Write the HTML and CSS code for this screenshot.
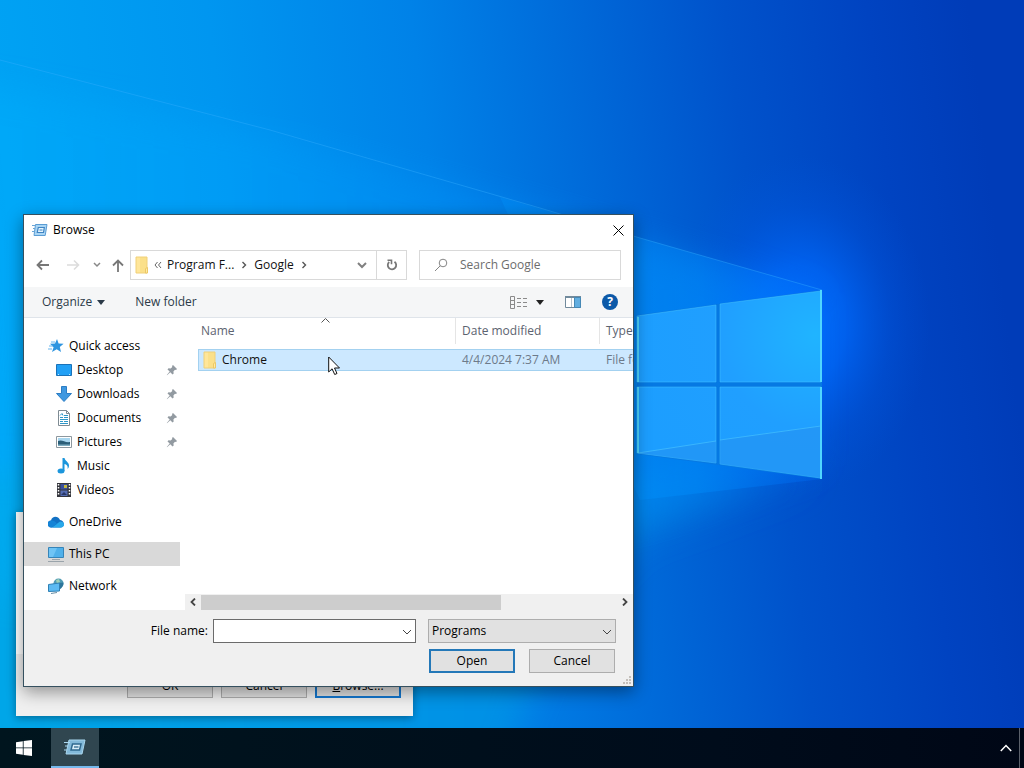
FILE: index.html
```html
<!DOCTYPE html>
<html lang="en">
<head>
  <meta charset="UTF-8">
  <meta name="viewport" content="width=device-width, initial-scale=1.0">
  <title>Browse</title>
  <link rel="stylesheet" href="styles.css">
</head>
<body>
  <!-- shared icons -->
  <svg class="defs" width="0" height="0" aria-hidden="true">
    <symbol id="pin" viewBox="0 0 12 12"><path d="M7 1l4 4-1 1-1-.3L7.400 7.500 7.700 9.500 6.500 10.500 4.300 8.200 1 11.200.8 11 3.700 7.600 1.500 5.400 2.500 4.200 4.600 4.500 6.300 2.900 6 2z" fill="#929aa1"/></symbol>
    <symbol id="folder" viewBox="0 0 14 18"><path d="M1 1h11v16H1z" fill="#fbe08a"/><path d="M1 1h4v16H1z" fill="#ffe69a"/><path d="M1 1h11v16H1z" fill="none" stroke="#f0d078"/><path d="M10.500 12.500l2-1V17h-2z" fill="#ffeaa5" stroke="#ecc866"/></symbol>
    <symbol id="down" viewBox="0 0 10 6"><path d="M1 1l4 4 4-4" fill="none" stroke="currentColor"/></symbol>
    <symbol id="right" viewBox="0 0 6 8"><path d="M1.500 1l3 3-3 3" fill="none" stroke="currentColor" stroke-width="1.400"/></symbol>
    <symbol id="run" viewBox="0 0 16 14"><path d="M3.500 1.500h11.500l-1.800 11H2z" fill="#a9d5f4" stroke="#5a9cd4"/><path d="M6.300 4.500h6l-.8 5H5.300z" fill="#e6f5fd" stroke="#3f84c4" stroke-width="1.200"/><path d="M7.500 7h3" stroke="#3f84c4"/><path d="M0 2.500h4M1 5.500h2M0 8.500h3" stroke="#6aa5d6"/></symbol>
    <symbol id="run-task" viewBox="0 0 22 18"><path d="M5 2h16l-3 14H2z" fill="#83b9d9" stroke="#a9d6ee"/><path d="M8.500 6h8.500l-1.500 6H7z" fill="#d9eef8" stroke="#31698e" stroke-width="1.500"/><path d="M10 9h4.500" stroke="#31698e" stroke-width="1.300"/><path d="M0 4.500h6M1 8h3M0 12h3" stroke="#a9d6ee"/></symbol>
  </svg>

  <div class="desktop">
    <svg class="wallpaper" viewBox="0 0 1024 768" preserveAspectRatio="xMidYMid slice" aria-hidden="true">
      <defs>
        <linearGradient id="sky" gradientUnits="userSpaceOnUse" x1="0" y1="384" x2="1000" y2="260">
          <stop offset="0" stop-color="#00a4f4"/>
          <stop offset=".25" stop-color="#0096f0"/>
          <stop offset=".45" stop-color="#0082e8"/>
          <stop offset=".62" stop-color="#0068d8"/>
          <stop offset=".76" stop-color="#0052cb"/>
          <stop offset=".9" stop-color="#0043c1"/>
          <stop offset="1" stop-color="#003cb8"/>
        </linearGradient>
        <linearGradient id="beam" gradientUnits="userSpaceOnUse" x1="0" y1="0" x2="822" y2="0">
          <stop offset="0" stop-color="#00b2ff" stop-opacity=".6"/>
          <stop offset=".5" stop-color="#009cff" stop-opacity=".5"/>
          <stop offset=".85" stop-color="#0090ff" stop-opacity=".75"/>
          <stop offset="1" stop-color="#0070ff" stop-opacity=".6"/>
        </linearGradient>
        <linearGradient id="low" gradientUnits="userSpaceOnUse" x1="0" y1="0" x2="822" y2="0">
          <stop offset="0" stop-color="#00a6e2" stop-opacity=".7"/>
          <stop offset=".7" stop-color="#0096e4" stop-opacity=".6"/>
          <stop offset="1" stop-color="#0070dc" stop-opacity=".2"/>
        </linearGradient>
        <radialGradient id="glow">
          <stop offset="0" stop-color="#0070ff"/>
          <stop offset=".35" stop-color="#0068fa" stop-opacity=".75"/>
          <stop offset=".7" stop-color="#005cea" stop-opacity=".25"/>
          <stop offset="1" stop-color="#0056dc" stop-opacity="0"/>
        </radialGradient>
        <radialGradient id="glass" gradientUnits="userSpaceOnUse" cx="815" cy="335" r="190">
          <stop offset="0" stop-color="#20b4ff"/>
          <stop offset=".5" stop-color="#209fff"/>
          <stop offset="1" stop-color="#1c9eff"/>
        </radialGradient>
        <filter id="soft" x="-10%" y="-20%" width="120%" height="140%"><feGaussianBlur stdDeviation="16"/></filter>
      </defs>
      <path d="M0 0h1024v768H0z" fill="url(#sky)"/>
      <path d="M-60 470L822 479 640 540 560 620 480 820H-60z" fill="url(#low)" filter="url(#soft)"/>
      <ellipse cx="800" cy="325" rx="130" ry="170" fill="url(#glow)"/>
      <path d="M-40 80L280 136 540 212 640 242 815 295v170L640 520 0 600z" fill="url(#beam)" opacity=".6" filter="url(#soft)"/>
      <path d="M500 197L640 238 822 290v189L640 500z" fill="url(#beam)" opacity=".5"/>
      <path d="M0 60L270 130 540 208 640 238 822 290" fill="none" stroke="#35b0ff" stroke-opacity=".4"/>
      <path d="M637 315L822 290v189L637 454z" fill="#0679e3"/>
      <g fill="url(#glass)" stroke="#45c4ff" stroke-opacity=".5">
        <path d="M637 316L716 305v77h-79z"/>
        <path d="M720 304L821 291v91H720z"/>
        <path d="M637 387h79v76l-79-10z"/>
        <path d="M720 387h101v91l-101-14z"/>
      </g>
      <path d="M638 453L716 441v22zM720 440l101-14v52l-101-14z" fill="#2590f0" fill-opacity=".5"/>
      <path d="M638 453L716 441M720 440l101-14" stroke="#54d0ff" stroke-opacity=".5"/>
      <path d="M821 290v92M821 387v92M638 317v65M638 387v66" stroke="#4fd6ff" stroke-width="2"/>
    </svg>

    <div class="window run-window">
      <div class="run-body"></div>
      <div class="run-buttons">
        <button type="button">OK</button>
        <button type="button">Cancel</button>
        <button type="button" class="default"><u>B</u>rowse...</button>
      </div>
    </div>

    <div class="window browse-window" role="dialog" aria-labelledby="dialog-title">
      <div class="title-bar">
        <svg width="16" height="14"><use href="#run"/></svg>
        <span id="dialog-title">Browse</span>
        <button type="button" class="close" aria-label="Close"><svg width="11" height="11" viewBox="0 0 11 11"><path d="M.5.5l10 10M10.500.5l-10 10" stroke="#000"/></svg></button>
      </div>

      <div class="nav-bar">
        <div class="nav-buttons">
          <button type="button" aria-label="Back"><svg width="14" height="12" viewBox="0 0 14 12" fill="none" stroke="#777" stroke-width="1.800"><path d="M13 6H2M6 1.500L1.500 6 6 10.500"/></svg></button>
          <button type="button" aria-label="Forward" disabled><svg width="14" height="12" viewBox="0 0 14 12" fill="none" stroke="#dcdcdc" stroke-width="1.600"><path d="M1 6h11M8 1.500L12.500 6 8 10.500"/></svg></button>
          <button type="button" class="recent" aria-label="Recent locations"><svg width="8" height="6" viewBox="0 0 8 6"><path d="M1 1l3 3 3-3" fill="none" stroke="#888" stroke-width="1.500"/></svg></button>
          <button type="button" aria-label="Up"><svg width="12" height="13" viewBox="0 0 12 13" fill="none" stroke="#777" stroke-width="1.800"><path d="M6 13V2M1 6.500l5-5 5 5"/></svg></button>
        </div>
        <div class="address">
          <svg width="14" height="18"><use href="#folder"/></svg>
          <svg class="more" width="8" height="8" viewBox="0 0 8 8"><path d="M3.500 1L1 4l2.500 3M7 1L4.500 4 7 7" fill="none" stroke="#666"/></svg>
          <a href="#">Program F...</a>
          <svg width="6" height="8"><use href="#right"/></svg>
          <a href="#">Google</a>
          <svg width="6" height="8"><use href="#right"/></svg>
          <button type="button" class="drop" aria-label="Previous locations"><svg width="10" height="8" viewBox="0 0 10 8"><path d="M1 2l4 4 4-4" fill="none" stroke="#808080" stroke-width="2"/></svg></button>
          <button type="button" class="refresh" aria-label="Refresh"><svg width="12" height="12" viewBox="0 0 12 12"><path d="M8.500 2.800A4.200 4.200 0 1 1 3.200 3" fill="none" stroke="#777" stroke-width="1.800"/><path d="M1.500 1.300h4v4" fill="none" stroke="#777" stroke-width="1.600"/></svg></button>
        </div>
        <label class="search">
          <svg width="14" height="14" viewBox="0 0 14 14" fill="none" stroke="#858585"><circle cx="9" cy="5" r="3.800"/><path d="M6.300 7.700L1 13"/></svg>
          <input type="text" placeholder="Search Google" aria-label="Search Google">
        </label>
      </div>

      <div class="toolbar">
        <button type="button">Organize <svg width="8" height="5" viewBox="0 0 8 5"><path d="M0 0h8L4 5z" fill="#2b3a48"/></svg></button>
        <button type="button">New folder</button>
        <button type="button" class="view" aria-label="Change your view">
          <svg width="17" height="13" viewBox="0 0 17 13" fill="none" stroke="#8a8a8a"><path d="M.5.5h4v12h-4zM.5 4.500h4M.5 8.500h4"/><path d="M7 2.500h10M7 6.500h10M7 10.500h10" stroke-dasharray="4 2"/></svg>
          <svg width="8" height="5" viewBox="0 0 8 5"><path d="M0 0h8L4 5z" fill="#222"/></svg>
        </button>
        <button type="button" aria-label="Show the preview pane"><svg width="16" height="12" viewBox="0 0 16 12"><path d="M.5.500h15v11H.5z" fill="#fff" stroke="#718a9c"/><path d="M0 0h16v2H0z" fill="#718a9c"/><path d="M9.500 1.500h6v10h-6z" fill="#62aee0" stroke="#4588b5"/><path d="M6.500 2v9" stroke="#b8c4cc"/></svg></button>
        <button type="button" class="help" aria-label="Help">?</button>
      </div>

      <div class="panes">
        <nav class="sidebar">
          <a href="#" class="root"><svg width="16" height="16" viewBox="0 0 16 16"><path d="M9 1l1.600 4.500 5 .2-3.800 3.300 1.200 5-4.300-2.700L4 14l1.600-4.800L2 5.800l5-.3z" fill="#2f95e0"/><path d="M1 8h4M0 11h4M3 4h4" stroke="#66b5ee"/></svg>Quick access</a>
          <a href="#"><svg width="16" height="16" viewBox="0 0 16 16"><path d="M.5 2.500h15v11H.5z" fill="#22a0f5" stroke="#1b72b8"/><path d="M2 12.500h1M13 12.500h1" stroke="#bfe5ff"/></svg>Desktop<svg class="pin" width="12" height="12"><use href="#pin"/></svg></a>
          <a href="#"><svg width="16" height="16" viewBox="0 0 16 16"><path d="M5.500.5h5v7h5L8 15.500.5 7.500h5z" fill="#3f98e0" stroke="#2c7dc4"/></svg>Downloads<svg class="pin" width="12" height="12"><use href="#pin"/></svg></a>
          <a href="#"><svg width="16" height="16" viewBox="0 0 16 16"><path d="M2.500.5h8l3 3v12h-11z" fill="#fff" stroke="#7f8b93"/><path d="M10.500.5v3h3" fill="none" stroke="#7f8b93"/><path d="M4 7.500h3M8 5.500h4M8 7.500h4M4 9.500h8M4 11.500h3M8 11.500h4M4 13.500h8M4 5.500l2-2 1 2" fill="none" stroke="#2e97c8"/></svg>Documents<svg class="pin" width="12" height="12"><use href="#pin"/></svg></a>
          <a href="#"><svg width="16" height="16" viewBox="0 0 16 16"><path d="M.5 2.500h15v11H.5z" fill="#fff" stroke="#8d989f"/><path d="M2 4h12v8H2z" fill="#a8d6ef"/><path d="M2 7c4-2 7 2 12 1v4H2z" fill="#2b5e78"/><path d="M2 10.500h12V12H2z" fill="#7cacc0"/></svg>Pictures<svg class="pin" width="12" height="12"><use href="#pin"/></svg></a>
          <a href="#"><svg width="16" height="16" viewBox="0 0 16 16"><ellipse cx="5" cy="13" rx="3.500" ry="2.500" fill="#1c96dc"/><path d="M6.500 0h2c.5 3 4.500 4 4.500 7.500 0 1.500-.5 2.500-1.500 3.500.8-3-1-4.500-3-5V13h-2z" fill="#1c96dc"/></svg>Music</a>
          <a href="#"><svg width="16" height="16" viewBox="0 0 16 16"><path d="M1 1h14v14H1z" fill="#34363d"/><path d="M2.500 2v12M13.500 2v12" stroke="#fff" stroke-width="1.500" stroke-dasharray="1.500 1.500"/><path d="M4.500 2h7v5.500h-7z" fill="#394f9a"/><path d="M4.500 8.500h7V14h-7z" fill="#536bb2"/><path d="M8 3h3v3H8z" fill="#c4b83c"/><path d="M5 13l3-3 3 3z" fill="#293766"/></svg>Videos</a>
          <a href="#" class="root group"><svg width="16" height="16" viewBox="0 0 16 16"><path d="M3.500 13.500a3.500 3.500 0 0 1-.5-7C4 2 10 1.500 12 6c5 .5 5 7 1 7.500z" fill="#1271c4"/><path d="M4 13.500L12 7.500c5 0 5.500 5.500 1 6z" fill="#28a8ea"/><path d="M3.500 13.500a3.500 3.500 0 0 1-.5-7c2-.5 4 .5 6 3.200z" fill="#1483d6"/></svg>OneDrive</a>
          <a href="#" class="root group selected"><svg width="16" height="16" viewBox="0 0 16 16"><path d="M.5 1.500h15v10H.5z" fill="#6fc4f5" stroke="#3684b8"/><path d="M9 2h6v9H5z" fill="#4fb0ea"/><path d="M4 13.500h8M0 15.500h16" stroke="#9aa4ab"/></svg>This PC</a>
          <a href="#" class="root group"><svg width="16" height="16" viewBox="0 0 16 16"><circle cx="10.500" cy="5.500" r="5" fill="#4f9bb4"/><path d="M8 2l3-1 1 3-3 2z" fill="#9fd0b8"/><path d="M11.500 5l4-.5c0 3-1.500 5.500-4 7z" fill="#2d769b"/><path d="M.5 6.500l11-1.500v8L.5 13.500z" fill="#5cbaf2" stroke="#2f80b4"/><path d="M3 15.500l6-1" stroke="#6a8ea5"/></svg>Network</a>
        </nav>

        <div class="files">
          <table>
            <thead>
              <tr>
                <th class="col-name">Name<svg class="sort" width="9" height="5" viewBox="0 0 9 5"><path d="M.5 4.500l4-4 4 4" fill="none" stroke="#555"/></svg></th>
                <th class="col-date">Date modified</th>
                <th class="col-type">Type</th>
              </tr>
            </thead>
            <tbody>
              <tr>
                <td class="file-name"><svg width="14" height="18"><use href="#folder"/></svg>Chrome</td>
                <td>4/4/2024 7:37 AM</td>
                <td>File folder</td>
              </tr>
            </tbody>
          </table>
          <div class="scrollbar">
            <button type="button" aria-label="Scroll left"><svg width="6" height="8" viewBox="0 0 6 8"><path d="M5 .5L1.500 4 5 7.500" fill="none" stroke="#444" stroke-width="1.800"/></svg></button>
            <div class="track"><div class="thumb"></div></div>
            <button type="button" aria-label="Scroll right"><svg width="6" height="8" viewBox="0 0 6 8"><path d="M1 .5L4.500 4 1 7.500" fill="none" stroke="#444" stroke-width="1.800"/></svg></button>
          </div>
        </div>
      </div>

      <form class="dialog-footer" onsubmit="return false">
        <div class="form-row">
          <label for="file-name">File name:</label>
          <div class="combo">
            <input type="text" id="file-name">
            <svg width="10" height="6"><use href="#down"/></svg>
          </div>
          <div class="combo filter">
            <select aria-label="File type"><option>Programs</option></select>
            <svg width="10" height="6"><use href="#down"/></svg>
          </div>
        </div>
        <div class="form-row actions">
          <button type="submit" class="default">Open</button>
          <button type="button">Cancel</button>
        </div>
        <svg class="grip" width="8" height="8" viewBox="0 0 8 8" fill="#c4bfba"><path d="M6 0h2v2H6zM3 3h2v2H3zM6 3h2v2H6zM0 6h2v2H0zM3 6h2v2H3zM6 6h2v2H6z"/></svg>
      </form>
    </div>

    <svg class="cursor" width="13" height="20" viewBox="0 0 13 20" aria-hidden="true"><path d="M.7 1v15l3.400-3.200 2.600 5.700 2.300-1-2.500-5.500h5z" fill="#fff" stroke="#111"/></svg>
  </div>

  <footer class="taskbar">
    <button type="button" aria-label="Start"><svg width="16" height="16" viewBox="0 0 16 16" fill="#fff"><path d="M0 2.200L6.800 1.200v6.300H0zM7.600 1.100L16 0v7.500H7.600zM0 8.300h6.800v6.500L0 13.800zM7.600 8.300H16V16l-8.400-1.100z"/></svg></button>
    <button type="button" class="task active" aria-label="Run"><svg width="22" height="18"><use href="#run-task"/></svg></button>
    <button type="button" class="tray" aria-label="Show hidden icons"><svg width="12" height="8" viewBox="0 0 12 8"><path d="M.8 7L6 1.500 11.200 7" fill="none" stroke="#fff" stroke-width="1.500"/></svg></button>
    <button type="button" class="show-desktop" aria-label="Show desktop"></button>
  </footer>
</body>
</html>
```
FILE: styles.css
```css
* { box-sizing: border-box; }
body { margin: 0; min-height: 100vh; display: flex; flex-direction: column; overflow: hidden; background: #003ab4; color: #000; font-family: "Open Sans", "Noto Sans", sans-serif; font-size: 12px; line-height: 16px; }
button, input, select { font: inherit; color: inherit; }
button { display: flex; align-items: center; justify-content: center; padding: 0; border: none; background: none; }
a { color: inherit; text-decoration: none; }
svg { flex: none; display: block; }
.defs { position: absolute; }

.desktop { flex: 1; }
.wallpaper { position: absolute; top: 0; left: 0; width: 100%; height: 100%; }

/* windows */
.window { position: absolute; }
.run-window { left: 16px; top: 512px; width: 397px; background: #fff; box-shadow: 0 2px 8px rgba(0,0,0,0.35); }
.run-body { height: 142px; }
.run-buttons { display: flex; justify-content: flex-end; gap: 8px; padding: 20px 12px 18px; background: #f0f0f0; }
.run-buttons button, .actions button { width: 86px; height: 24px; border: 1px solid #adadad; background: #e1e1e1; }
.run-buttons .default, .actions .default { border: 2px solid #2478b8; }
.run-buttons .default { border-color: #1478d0; }
.browse-window { left: 23px; top: 214px; width: 611px; border: 1px solid #35505f; background: #fff; box-shadow: 0 5px 16px rgba(0,0,0,0.4); }

.title-bar { display: flex; align-items: center; height: 30px; padding-left: 8px; gap: 5px; }
.close { margin-left: auto; width: 30px; height: 30px; }

.nav-bar { display: flex; align-items: center; height: 42px; padding: 0 12px 2px; }
.nav-buttons { display: flex; flex: none; gap: 16px; width: 94px; }
.nav-buttons .recent { margin: 0 -5px 0 -3px; }
.address { display: flex; flex: none; align-items: center; width: 277px; height: 30px; border: 1px solid #d9d9d9; padding-left: 4px; color: #555; gap: 7px; }
.address a { color: #111; }
.address .more { margin: 0 -2px; }
.drop { margin-left: auto; width: 28px; height: 28px; }
.refresh { width: 30px; height: 28px; margin-left: -7px; border-left: 1px solid #d9d9d9; }
.search { display: flex; flex: 1; min-width: 0; align-items: center; height: 30px; margin-left: 12px; padding-left: 14px; border: 1px solid #d9d9d9; gap: 12px; }
.search input { flex: 1; min-width: 0; padding: 0; border: none; outline: none; background: none; }
.search input::placeholder { color: #6d6d6d; opacity: 1; }

.toolbar { display: flex; align-items: center; height: 31px; padding: 0 15px 0 18px; background: #f5f6f7; border-bottom: 1px solid #dfe4ea; color: #2b3a48; gap: 21px; }
.toolbar button { gap: 5px; }
.toolbar button:first-child { margin-right: 9px; }
.toolbar .view { margin-left: auto; gap: 9px; }
.toolbar .help { width: 16px; height: 16px; border-radius: 50%; background: #0c59a8; color: #fff; font-weight: bold; }

.panes { display: flex; }
.sidebar { width: 161px; padding: 16px 5px 12px 0; }
.sidebar a { display: flex; align-items: center; height: 24px; padding: 0 2px 0 32px; gap: 5px; }
.sidebar .root { padding-left: 24px; }
.sidebar .group { margin-top: 8px; }
.sidebar .selected { background: #d9d9d9; }
.sidebar .pin { margin-left: auto; }

.files { flex: 1; min-width: 0; display: flex; flex-direction: column; overflow: hidden; }
.files table { width: 540px; margin-left: 13px; border-collapse: separate; border-spacing: 0; table-layout: fixed; }
.files th { position: relative; height: 26px; padding: 0 0 0 6px; border-left: 1px solid #e5e5e5; font-weight: normal; text-align: left; color: #5c6370; }
.files .col-name { width: 257px; padding-left: 3px; border-left: none; }
.col-date { width: 144px; }
.sort { position: absolute; top: 0; left: 123px; }
.files tbody::before { content: ""; display: block; height: 5px; }
.files td { height: 22px; padding: 0 0 0 7px; background: #cce8ff; border: solid #a3d1f0; border-width: 1px 0; color: #6d7a8a; }
.files .file-name { display: flex; align-items: center; gap: 5px; padding-left: 4px; border-left-width: 1px; color: #111; }
.scrollbar { display: flex; align-items: center; margin-top: auto; height: 16px; background: #f0f0f0; }
.scrollbar button { width: 16px; height: 16px; }
.track { flex: 1; }
.thumb { width: 72%; height: 15px; background: #cdcdcd; }

.dialog-footer { position: relative; padding: 9px 17px 13px; background: #f0f0f0; }
.form-row { display: flex; align-items: center; justify-content: flex-end; gap: 12px; }
.form-row label { margin-right: -7px; }
.combo { position: relative; width: 203px; height: 24px; }
.combo input, .combo select { width: 100%; height: 100%; margin: 0; padding: 0 3px; border: 1px solid #6b6b6b; border-radius: 0; background: #fff; outline: none; appearance: none; }
.combo svg { position: absolute; right: 4px; top: 10px; color: #444; pointer-events: none; }
.combo.filter { width: 188px; }
.combo.filter select { background: #e1e1e1; border-color: #adadad; }
.actions { margin-top: 6px; padding-right: 1px; gap: 14px; }
.grip { position: absolute; right: 2px; bottom: 2px; }
.cursor { position: absolute; left: 328px; top: 356px; }

/* taskbar */
.taskbar { position: relative; display: flex; height: 40px; background: linear-gradient(90deg, #00151e, #000c1b 70%, #000716); }
.taskbar button { width: 48px; height: 40px; }
.taskbar .task { margin-left: 3px; background: #304650; border-bottom: 2px solid #76b9ed; }
.taskbar .tray { width: 26px; margin-left: auto; }
.taskbar .show-desktop { width: 5px; border-left: 1px solid #5b616b; }
```
